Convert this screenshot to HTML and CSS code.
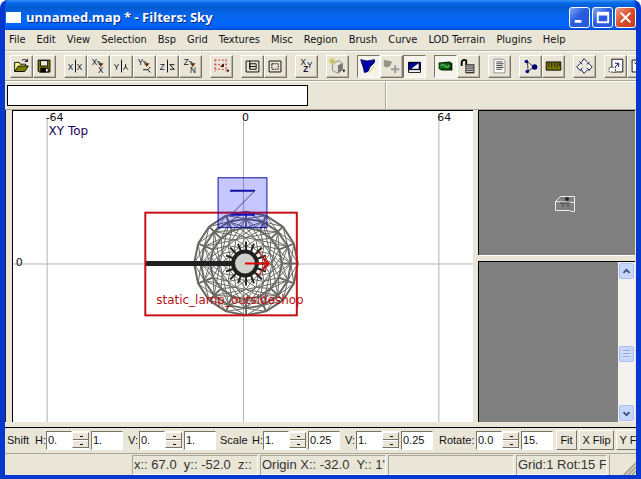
FILE: index.html
```html
<!DOCTYPE html>
<html lang="en">
<head>
<meta charset="utf-8">
<title>unnamed.map * - Filters: Sky</title>
<link rel="stylesheet" href="styles.css">
</head>
<body>
<div class="window">
  <header class="titlebar">
    <span class="app-icon"></span>
    <h1>unnamed.map * - Filters: Sky</h1>
    <button class="caption" aria-label="Minimize"><svg viewBox="0 0 20 20"><path d="M5 14h7" stroke="#fff" stroke-width="3"/></svg></button>
    <button class="caption" aria-label="Maximize"><svg viewBox="0 0 20 20"><path d="M5 5h11v10H5zM5 7h11" fill="none" stroke="#fff" stroke-width="2"/></svg></button>
    <button class="caption close" aria-label="Close"><svg viewBox="0 0 20 20"><path d="M5 5l10 10M15 5L5 15" stroke="#fff" stroke-width="2"/></svg></button>
  </header>

  <nav class="menubar">
    <button>File</button><button>Edit</button><button>View</button><button>Selection</button><button>Bsp</button><button>Grid</button><button>Textures</button><button>Misc</button><button>Region</button><button>Brush</button><button>Curve</button><button>LOD Terrain</button><button>Plugins</button><button>Help</button>
  </nav>

  <div class="toolbar">
    <div class="group">
      <button aria-label="Open"><svg viewBox="0 0 23 23"><path d="M4 17V7h5l1 2h6v3" fill="#ffff9c" stroke="#000"/><path d="M4 17l4-6h11l-4 6z" fill="#808000" stroke="#000"/><path d="M12 5q3-3 6 1m0-3v3h-3" fill="none" stroke="#000"/></svg></button>
      <button aria-label="Save"><svg viewBox="0 0 23 23"><path d="M4.500 4.500h13v13h-12l-1-1z" fill="#808000" stroke="#000"/><path d="M7 5h8v6H7z" fill="#ece9d8" stroke="#000"/><path d="M7 13h9v5H7z"/><path d="M13 14h2v3h-2z" fill="#fff"/></svg></button>
    </div>
    <div class="group">
      <button aria-label="Flip X"><svg viewBox="0 0 23 23"><text x="3" y="15">X</text><text x="13" y="15">X</text><path d="M11.500 4v14" stroke="#000"/></svg></button>
      <button aria-label="Rotate X"><svg viewBox="0 0 23 23"><text x="4" y="10">X</text><text x="11" y="19">X</text><path d="M10 6q4 0 4 4" fill="none" stroke="#000"/><path d="M11 8h6l-3 4z" fill="#630"/></svg></button>
      <button aria-label="Flip Y"><svg viewBox="0 0 23 23"><text x="3" y="15">Y</text><path d="M11.500 4v14M13.500 15l2.500-3 2.500 3M16 12V9" fill="none" stroke="#000"/></svg></button>
      <button aria-label="Rotate Y"><svg viewBox="0 0 23 23"><text x="4" y="10">Y</text><path d="M10 6q4 0 4 4M18 12l-3 3 3 3M15 15h-5" fill="none" stroke="#000"/><path d="M11 8h6l-3 4z" fill="#630"/></svg></button>
      <button aria-label="Flip Z"><svg viewBox="0 0 23 23"><text x="3" y="15">Z</text><path d="M11.500 4v14M14 9.500h5M14 14.500h5M14 9.500l5 5" fill="none" stroke="#000"/></svg></button>
      <button aria-label="Rotate Z"><svg viewBox="0 0 23 23"><text x="4" y="10">Z</text><text x="11" y="19">N</text><path d="M10 6q4 0 4 4" fill="none" stroke="#000"/><path d="M11 8h6l-3 4z" fill="#630"/></svg></button>
    </div>
    <div class="group">
      <button aria-label="Select complete tall"><svg viewBox="0 0 23 23"><path d="M4 4.500h13M4 9.500h13M4 14.500h13M4.500 4v13M16.500 4v13" fill="none" stroke="#c22" stroke-dasharray="2 2"/><path d="M10 12l4-4v4z" fill="#300"/><path d="M17 15h3l-1.500 3z"/></svg></button>
    </div>
    <div class="group">
      <button aria-label="Select inside"><svg viewBox="0 0 23 23"><path d="M4.500 5.500h14v12h-14zM8.500 8.500h7v6h-7zM8.500 5v9M8 11.500h7" fill="none" stroke="#000"/></svg></button>
      <button aria-label="Select partial tall"><svg viewBox="0 0 23 23"><path d="M4.500 5.500h13v12h-13z" fill="none" stroke="#000"/><path d="M7.500 8.500h7v6h-7z" fill="none" stroke="#000" stroke-dasharray="2 1"/></svg></button>
    </div>
    <div class="group">
      <button aria-label="Change views"><svg viewBox="0 0 23 23"><text x="5" y="10">X</text><text x="12" y="13">Y</text><text x="8" y="18" class="strong">Z</text></svg></button>
    </div>
    <div class="group">
      <button aria-label="Texture view mode"><svg viewBox="0 0 23 23"><path d="M6 8l7-3 4 3v7l-5 4-6-3z" fill="#e4e2d8" stroke="#888"/><path d="M12 10l5-2v7l-5 4z" fill="#777"/><path d="M3 3l5 5M8 3L3 8M5.500 2v7M2 5.500h7" stroke="#c9ba35"/><path d="M17 15h3l-1.500 3z"/></svg></button>
    </div>
    <div class="group">
      <button class="pressed" aria-label="Cubic clipping"><svg viewBox="0 0 23 23"><path d="M3 4q7 3 15 0v3l-5 5-2 5-4 1-1-5z" fill="#0000a8" stroke="#000060"/><path d="M19 9v7l-6 3-3 0 4-5z" fill="#ffffc8"/><path d="M12 18l6-7" stroke="#999" stroke-dasharray="2 1"/></svg></button>
      <button aria-label="Add camera"><svg viewBox="0 0 23 23"><path d="M3 4l9 2-2 5-4 2-3-2z" fill="#969687"/><path d="M15.500 10v9M11 14.500h9" stroke="#999" stroke-width="2"/></svg></button>
      <button class="pressed" aria-label="Preview"><svg viewBox="0 0 23 23"><path d="M5 7h13v11H5z" fill="#fff" stroke="#000"/><path d="M5 7h13v8H5z" fill="#000090" stroke="#000"/><path d="M8 14l8-6v6z" fill="#ffffd8"/></svg></button>
    </div>
    <div class="group">
      <button class="pressed" aria-label="Show models"><svg viewBox="0 0 23 23"><path d="M4 7l12-1 3 2v8H7l-3-2z" fill="#002800"/><path d="M5 8h11v6H5z" fill="#087018"/><path d="M6 11q3-3 5 0t5-1" fill="none" stroke="#55a050" stroke-width="2"/></svg></button>
      <button aria-label="Texture lock"><svg viewBox="0 0 23 23"><path d="M4 11V7q1-4 5-2v5" fill="none" stroke="#000" stroke-width="2"/><path d="M8 9h10v10H8z" fill="#333"/><path d="M9 11h8M9 13h8M9 15h8M9 17h8" stroke="#ddd"/></svg></button>
    </div>
    <div class="group">
      <button aria-label="Entity list"><svg viewBox="0 0 23 23"><path d="M5.500 3.500h10l2 2v13h-12z" fill="#fff" stroke="#888"/><path d="M8 6.500h7M8 8.500h8M8 10.500h7M8 12.500h8M8 14.500h6" stroke="#333"/></svg></button>
    </div>
    <div class="group">
      <button aria-label="Edit curve"><svg viewBox="0 0 23 23"><path d="M8 6l7 6-6 5z" fill="none" stroke="#333"/><circle cx="7" cy="6" r="2" fill="#007"/><circle cx="16" cy="12" r="3" fill="#007"/><circle cx="8" cy="17" r="2" fill="#007"/></svg></button>
      <button aria-label="Ruler"><svg viewBox="0 0 23 23"><path d="M3.500 6.500h16v9h-16z" fill="#777700" stroke="#000"/><path d="M6.500 7v5M9.500 7v6M12.500 7v5M15.500 7v6M18 7v4" stroke="#222"/></svg></button>
    </div>
    <div class="group">
      <button aria-label="Rotate freely"><svg viewBox="0 0 23 23"><path d="M8 7l3-4 4 4M16 8l4 4-4 4M15 15l-4 4-3-4M7 16l-4-4 4-4" fill="#fff" stroke="#003"/><path d="M6 6l3 3M17 7l-3 2M7 16l2-3M17 16l-3-3" stroke="#007"/></svg></button>
    </div>
    <div class="group">
      <button aria-label="Scale"><svg viewBox="0 0 23 23"><path d="M7.500 3.500h12v14h-12z" fill="#fff" stroke="#000"/><path d="M4.500 12.500h7v5h-7z" fill="#fff" stroke="#444" stroke-dasharray="2 1"/><path d="M11 12l4-4m-4 0h4v4" stroke="#007" fill="none"/></svg></button>
      <button aria-label="Scale down"><svg viewBox="0 0 23 23"><path d="M4.500 4.500h13v13h-13z" fill="#fff" stroke="#000"/><path d="M7 7l5 5" stroke="#000"/></svg></button>
    </div>
  </div>

  <div class="searchrow">
    <input type="text" aria-label="Filter">
    <span class="divider"></span>
  </div>

  <main class="work">
    <section class="map" aria-label="Top view">
      <svg viewBox="0 0 462 312" preserveAspectRatio="xMidYMid slice">
        <path class="grid" d="M34.500 7V312M231.500 7V312M427.500 7V312M0 153.500H462"/>
        <g class="axis"><text x="33" y="10">-64</text><text x="230" y="10">0</text><text x="426" y="10">64</text><text x="3" y="155">0</text></g>
        <text class="view-name" x="36" y="24">XY Top</text>
        <g id="lamp"></g>
        <path d="M133 153H222" stroke="#202020" stroke-width="5"/>
        <circle cx="233" cy="153" r="12" fill="#d0d0cd" stroke="#202020" stroke-width="4"/>
        <rect class="selection" x="133" y="102" width="152" height="103"/>
        <path d="M233 153H257M251 148l6 5-6 5" fill="none" stroke="#e00000" stroke-width="2"/>
        <path d="M245 143q5-3 4 3q7-2 4 5M245 163q5 3 4-3q7 2 4-5" fill="none" stroke="#c01010"/>
        <text class="entity" x="144" y="194">static_lamp_outsideshop</text>
        <rect x="206" y="67" width="49" height="50" fill="#0000ff" fill-opacity=".22" stroke="#1010a0"/>
        <path d="M218 80H243" stroke="#1010a0" stroke-width="2"/><path d="M243 80L219 104" stroke="#444480"/><path d="M219 104H243" stroke="#1010c0" stroke-width="2"/>
      </svg>
    </section>
    <div class="side">
      <section class="camera" aria-label="Camera">
        <svg viewBox="0 0 22 18"><path d="M1.500 6.500l5-5h14v15h-3l-2-1h-14zM1.500 6.500l19 1" fill="none" stroke="#eee"/><path d="M6 8h10M9 9v3M14 9v3" stroke="#444"/><circle cx="13" cy="4" r="2" fill="#222"/></svg>
      </section>
      <section class="textures" aria-label="Textures">
        <div class="scrollbar">
          <button aria-label="Scroll up"><svg viewBox="0 0 15 15"><path d="M4 9l3.500-3.500L11 9" fill="none" stroke="#35507c" stroke-width="2"/></svg></button>
          <div class="track"><span class="thumb"></span></div>
          <button aria-label="Scroll down"><svg viewBox="0 0 15 15"><path d="M4 6l3.500 3.500L11 6" fill="none" stroke="#35507c" stroke-width="2"/></svg></button>
        </div>
      </section>
    </div>
  </main>

  <form class="surface">
    <span class="lead shift">Shift</span>
    <div class="field"><label for="sh">H:</label><span class="spin"><input id="sh" value="0."><button type="button" aria-label="Adjust horizontal shift"></button></span><input class="step" aria-label="Horizontal shift step" value="1."></div>
    <div class="field"><label for="sv">V:</label><span class="spin"><input id="sv" value="0."><button type="button" aria-label="Adjust vertical shift"></button></span><input class="step" aria-label="Vertical shift step" value="1."></div>
    <span class="lead scale">Scale</span>
    <div class="field"><label for="ch">H:</label><span class="spin"><input id="ch" value="1."><button type="button" aria-label="Adjust horizontal scale"></button></span><input class="step" aria-label="Horizontal scale step" value="0.25"></div>
    <div class="field"><label for="cv">V:</label><span class="spin"><input id="cv" value="1."><button type="button" aria-label="Adjust vertical scale"></button></span><input class="step" aria-label="Vertical scale step" value="0.25"></div>
    <div class="field rotate"><label for="ro">Rotate:</label><span class="spin"><input id="ro" value="0.0"><button type="button" aria-label="Adjust rotation"></button></span><input class="step" aria-label="Rotation step" value="15."></div>
    <button type="button" class="push fit">Fit</button><button type="button" class="push">X Flip</button><button type="button" class="push">Y Flip</button>
  </form>

  <footer class="status">
    <span class="cell blank"></span>
    <span class="cell">x:: 67.0&nbsp; y:: -52.0&nbsp; z::</span>
    <span class="cell">Origin X:: -32.0&nbsp; Y:: 1'</span>
    <span class="cell"></span>
    <span class="cell info">Grid:1 Rot:15 F</span>
    <span class="grip"><svg viewBox="0 0 14 14"><path d="M2 14L14 2M6 14l8-8M10 14l4-4" stroke="#aaa797" stroke-width="2"/></svg></span>
  </footer>
</div>
<script src="lamp.js"></script>
</body>
</html>
```
FILE: styles.css
```css
* { box-sizing: border-box; }
html, body { height: 100%; }
body { margin: 0; background: #fff; font: 11px/13px "DejaVu Sans Condensed", "Noto Sans", sans-serif; color: #111; }
button, input { font: inherit; color: inherit; margin: 0; padding: 0; border-radius: 0; }
svg { display: block; }

.window { height: 100vh; display: flex; flex-direction: column; overflow: hidden; background: #0831d9; border: solid #0638cf; border-width: 0 5px 4px; border-radius: 8px 8px 0 0; }
.window > * { background: #e9e6d8; flex: none; }

.window > .titlebar { display: flex; align-items: center; gap: 2px; height: 30px; margin: 0 -5px; padding: 4px 5px 0 6px; background: linear-gradient(#3b92f5, #0569e8 3px, #055bd0 7px, #0566ee 16px, #0064ff 27px, #0046cc); color: #fff; }
.titlebar h1 { flex: 1; margin: 0; font: bold 13px/18px "Open Sans", sans-serif; text-shadow: 1px 1px #0a2a80; white-space: nowrap; }
.app-icon { width: 15px; height: 11px; margin-right: 3px; background: #fff; }
.caption { width: 21px; height: 21px; border: 1px solid #fff; border-radius: 3px; background: linear-gradient(135deg, #7fa8f4, #2a5ce0 45%, #2458d8); }
.caption.close { background: linear-gradient(135deg, #f0a088, #dc5030 45%, #c83c18); }

.menubar { display: flex; height: 21px; padding: 0 0 1px; border-bottom: 1px solid #b5b2a2; overflow: hidden; }
.menubar button { border: 0; background: none; padding: 0 6px 0 5px; white-space: nowrap; }
.menubar button:first-child { padding-left: 4px; }

.toolbar { display: flex; gap: 8px; height: 30px; padding: 3px 5px; border-top: 1px solid #fff; border-bottom: 1px solid #aaa797; overflow: hidden; }
.group { display: flex; flex: none; }
.group button { width: 23px; height: 23px; border: 1px solid; border-color: #fff #77756a #77756a #fff; background: #e9e6d8; box-shadow: inset -1px -1px #bab7a8; }
.group button.pressed { border-color: #77756a #fff #fff #77756a; background: #f5f3ec; box-shadow: none; }
.group svg { width: 21px; height: 21px; }
.group text { font: 9px "Liberation Sans", sans-serif; fill: #101030; }
.group text.strong { font-weight: bold; }

.searchrow { display: flex; height: 29px; padding-left: 2px; border-top: 1px solid #fff; border-bottom: 1px solid #aaa797; }
.searchrow input { width: 301px; height: 21px; margin-top: 3px; border: 1px solid #000; background: #fff; }
.divider { width: 2px; margin-left: 77px; border-left: 1px solid #aaa797; border-right: 1px solid #fff; }

.window > .work { display: flex; flex: 1 1 0; min-height: 0; padding: 0 1px 0 7px; border-left: 1px solid #222; }
.map { flex: 1; min-width: 0; margin-left: -1px; background: #fff; border: solid #000; border-width: 1px 0 0 1px; overflow: hidden; }
.map svg { width: 100%; height: 100%; }
.map text { font: 12px "DejaVu Sans", sans-serif; fill: #111; }
.map .axis text { font-size: 11px; }
.map text.view-name { fill: #200060; }
.map text.entity { fill: #b81010; }
.grid { stroke: #b2b2b2; }
.selection { fill: none; stroke: #c80f14; stroke-width: 2; }
#lamp { fill: none; stroke: #686863; }
#lamp .rim { stroke-width: 2; }
#lamp .core { stroke: #252523; stroke-width: 2; }

.side { width: 157px; margin-left: 5px; display: grid; grid-template-rows: minmax(0, 145fr) minmax(0, 160fr); gap: 6px; }
.camera, .textures { background: #808080; border: solid #000; border-width: 1px 0 0 1px; box-shadow: 0 1px #fff; }
.camera { display: flex; align-items: center; justify-content: center; padding: 42px 0 0 16px; }
.camera svg { width: 22px; height: 18px; }
.textures { display: flex; justify-content: flex-end; }
.scrollbar { width: 17px; display: flex; flex-direction: column; background: #f3f2ee; padding: 1px; }
.scrollbar button, .thumb { width: 15px; height: 16px; border: 1px solid #a8bdf0; border-radius: 2px; background: #c8d7fb; flex: none; }
.track { flex: 1; display: flex; flex-direction: column; justify-content: flex-end; padding-bottom: 43px; }
.thumb { background: repeating-linear-gradient(#8ea8e0 0 1px, #d5e0fc 1px 3px) center / 7px 8px no-repeat, #c8d7fb; }

.surface { display: flex; align-items: center; height: 32px; margin: 0; padding: 6px 0 1px 2px; overflow: hidden; font: 11px/13px "Liberation Sans", sans-serif; white-space: nowrap; }
.window > .surface { background: linear-gradient(#e9e6d8 5px, #000 5px 6px, #e9e6d8 6px); border-bottom: 1px solid #aaa797; }
.lead { flex: none; }
.shift { width: 28px; }
.scale { width: 32px; margin-left: -1px; }
.field { display: flex; flex: none; align-items: center; margin-right: 5px; }
.field label { width: 11px; }
.rotate { margin: 0 3px 0 1px; }
.rotate label { width: 37px; }
.field input { height: 19px; min-width: 0; padding: 0 1px; border: 1px solid; border-color: #77756a #fff #fff #77756a; background: #fff; }
.spin { display: flex; align-items: center; width: 43px; margin-right: 2px; background: #fff; }
.spin input { width: 26px; }
.spin button { width: 17px; height: 16px; border: 1px solid; border-color: #fff #77756a #77756a #fff; background: conic-gradient(#111 0 0) 7px 3px / 3px 1px no-repeat, conic-gradient(#111 0 0) 7px 11px / 3px 1px no-repeat, linear-gradient(#e9e6d8 6px, #77756a 6px 7px, #fff 7px 8px, #e9e6d8 8px); }
.field .step { width: 32px; }
.push { flex: none; width: 35px; height: 20px; margin-right: 2px; border: 1px solid; border-color: #fff #77756a #77756a #fff; background: #e9e6d8; }
.push.fit { width: 21px; }

.status { display: flex; gap: 2px; height: 21px; padding: 1px 0 0; font: 13px/18px "Liberation Sans", sans-serif; color: #333; }
.cell { width: 126px; padding-left: 1px; border: 1px solid; border-color: #aaa797 #fff #fff #aaa797; overflow: hidden; white-space: nowrap; }
.cell.blank { width: 125px; border-color: #e9e6d8; }
.cell.info { width: 91px; }
.grip { flex: 1; display: flex; justify-content: flex-end; align-items: flex-end; border-left: 1px solid #aaa797; }
.grip svg { width: 14px; height: 14px; }
```
FILE: lamp.js
```js
// Wireframe of the round lamp seen from above: faceted rings joined by cross braces.
const lamp = document.getElementById('lamp');
const centre = { x: 234, y: 153 };
const sides = 16;
const rings = [52, 45, 36, 26, 17];

function point(radius, step) {
  const a = (step / sides) * Math.PI * 2;
  return `${Math.round(centre.x + radius * Math.cos(a))} ${Math.round(centre.y + radius * Math.sin(a))}`;
}

function draw(d, cls) {
  const path = document.createElementNS('http://www.w3.org/2000/svg', 'path');
  path.setAttribute('d', d);
  path.setAttribute('class', cls);
  lamp.append(path);
}

let rim = '';
let mesh = '';
rings.forEach((r, k) => {
  for (let i = 0; i < sides; i++) {
    const edge = `M${point(r, i)}L${point(r, i + 1)}`;
    if (k < 3) rim += edge; else mesh += edge;
    const inner = rings[k + 1];
    if (inner) mesh += `M${point(r, i)}L${point(inner, i + 1)}M${point(r, i)}L${point(inner, i - 1)}`;
  }
});
for (let i = 0; i < sides; i++) {
  mesh += `M${point(45, i)}L${point(26, i + 2)}M${point(45, i)}L${point(26, i - 2)}`;
  rim += `M${point(52, i)}L${point(36, i)}`;
}
draw(mesh, 'mesh');
draw(rim, 'rim');

let spikes = '';
for (let i = 0; i < sides; i++) spikes += `M${point(13, i)}L${point(22, i)}`;
draw(spikes, 'core');
```
